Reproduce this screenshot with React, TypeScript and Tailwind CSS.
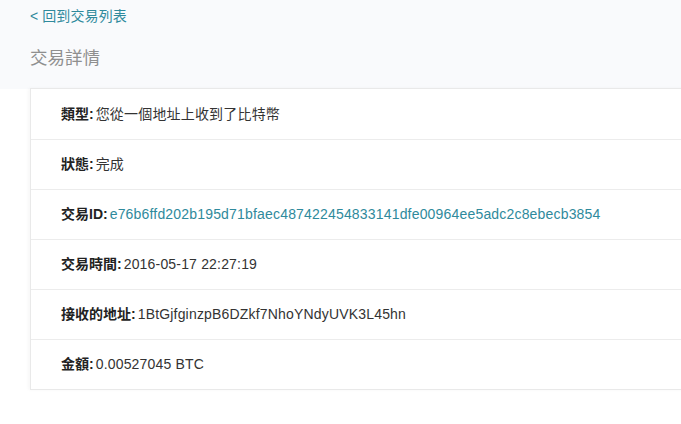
const rows: { label: string; value: string; link?: boolean }[] = [
  { label: '類型:', value: '您從一個地址上收到了比特幣' },
  { label: '狀態:', value: '完成' },
  { label: '交易ID:', value: 'e76b6ffd202b195d71bfaec487422454833141dfe00964ee5adc2c8ebecb3854', link: true },
  { label: '交易時間:', value: '2016-05-17 22:27:19' },
  { label: '接收的地址:', value: '1BtGjfginzpB6DZkf7NhoYNdyUVK3L45hn' },
  { label: '金額:', value: '0.00527045 BTC' },
];

export default function App() {
  return (
    <div
      className="w-[681px] h-[424px] overflow-hidden bg-white text-[14px] text-[#333]"
      style={{ fontFamily: '"Liberation Sans", Arial, "Noto Sans CJK TC", sans-serif' }}
    >
      {/* Header */}
      <div className="bg-[#f9fafc] h-[89px] pl-[30px] pt-[7px]">
        <a className="block text-[#2f8a9c] leading-[18px] tracking-[0.1px]">&lt; 回到交易列表</a>
        <h1 className="mt-[21px] text-[17.5px] leading-[24px] text-[#8f8f8f]">交易詳情</h1>
      </div>

      {/* Details card */}
      <div className="ml-[30px] w-[700px] bg-white border-l border-b border-t border-[#e9e9e9] shadow-[-2px_0_3px_rgba(0,0,0,0.03)] -mt-px">
        {rows.map((row, i) => (
          <div
            key={i}
            className={`h-[50px] flex items-center pl-[30px] ${i > 0 ? 'border-t border-[#ececec]' : ''}`}
          >
            <span className="font-bold text-[#222]">{row.label}</span>
            <span className={`ml-[2px] whitespace-nowrap tracking-[0.18px] ${row.link ? 'text-[#2f8a9c]' : 'text-[#333]'}`}>{row.value}</span>
          </div>
        ))}
      </div>
    </div>
  );
}
